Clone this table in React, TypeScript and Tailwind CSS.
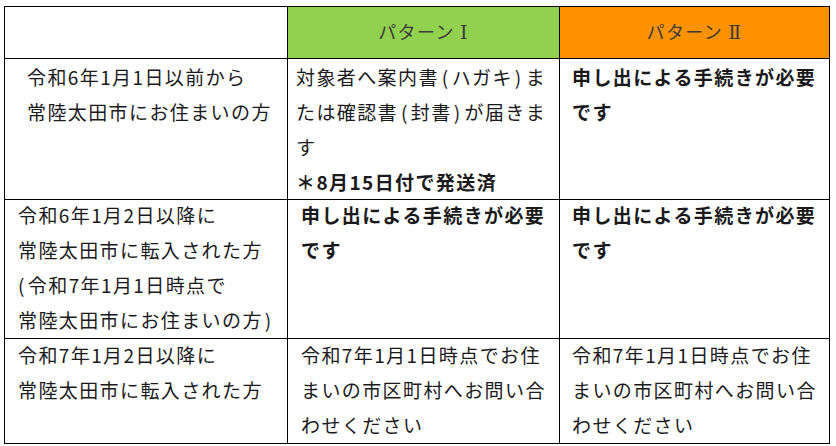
const font = { fontFamily: '"Noto Sans CJK JP", "Noto Sans", sans-serif' };
const serif = { fontFamily: '"DejaVu Serif", "Liberation Serif", serif' };

function Open() {
  return <span className="ml-[3px] mr-[2px]">(</span>;
}
function Close() {
  return <span className="ml-[2px] mr-[3px]">)</span>;
}

export default function App() {
  const cell = 'border border-black align-top p-0 leading-[35px] whitespace-nowrap';
  return (
    <div className="min-h-screen bg-white pl-[4px] pt-[6px]" style={font}>
      <table className="border-collapse text-[19px] tracking-[1.4px] text-[#1a1a1a]" style={{ tableLayout: 'fixed' }}>
        <colgroup>
          <col className="w-[283px]" />
          <col className="w-[272px]" />
          <col className="w-[270px]" />
        </colgroup>
        <tbody>
          <tr className="h-[52px]">
            <td className="border border-black p-0"></td>
            <td className="border border-black p-0 bg-[#92d050] text-center align-middle text-[#3a3a3a] text-[18px]">
              パターン<span className="ml-[5px] text-[19px]" style={serif}>Ⅰ</span>
            </td>
            <td className="border border-black p-0 bg-[#ff9200] text-center align-middle text-[#3a3a3a] text-[18px]">
              パターン<span className="ml-[5px] text-[19px]" style={serif}>Ⅱ</span>
            </td>
          </tr>
          <tr className="h-[138px]">
            <td className={`${cell} pl-[22px]`}>
              令和6年1月1日以前から<br />常陸太田市にお住まいの方
            </td>
            <td className={`${cell} pl-[8px]`}>
              対象者へ案内書<Open />ハガキ<Close />ま<br />たは確認書<Open />封書<Close />が届きま<br />す<br />
              <span className="font-bold">＊8月15日付で発送済</span>
            </td>
            <td className={`${cell} pl-[12px] font-bold`}>
              申し出による手続きが必要<br />です
            </td>
          </tr>
          <tr className="h-[139px]">
            <td className={`${cell} pl-[13px]`}>
              <div className="-mt-[3px]">
                令和6年1月2日以降に<br />常陸太田市に転入された方<br />(<span className="ml-[2px]">令和7年1月1日時点で</span><br />常陸太田市にお住まいの方<span className="ml-[2px]">)</span>
              </div>
            </td>
            <td className={`${cell} pl-[13px] font-bold`}>
              <div className="-mt-[3px]">申し出による手続きが必要<br />です</div>
            </td>
            <td className={`${cell} pl-[12px] font-bold`}>
              <div className="-mt-[3px]">申し出による手続きが必要<br />です</div>
            </td>
          </tr>
          <tr className="h-[105px]">
            <td className={`${cell} pl-[13px]`}>
              <div className="-mt-[2px]">令和7年1月2日以降に<br />常陸太田市に転入された方</div>
            </td>
            <td className={`${cell} pl-[13px]`}>
              <div className="-mt-[2px]">令和7年1月1日時点でお住<br />まいの市区町村へお問い合<br />わせください</div>
            </td>
            <td className={`${cell} pl-[12px]`}>
              <div className="-mt-[2px]">令和7年1月1日時点でお住<br />まいの市区町村へお問い合<br />わせください</div>
            </td>
          </tr>
        </tbody>
      </table>
    </div>
  );
}
